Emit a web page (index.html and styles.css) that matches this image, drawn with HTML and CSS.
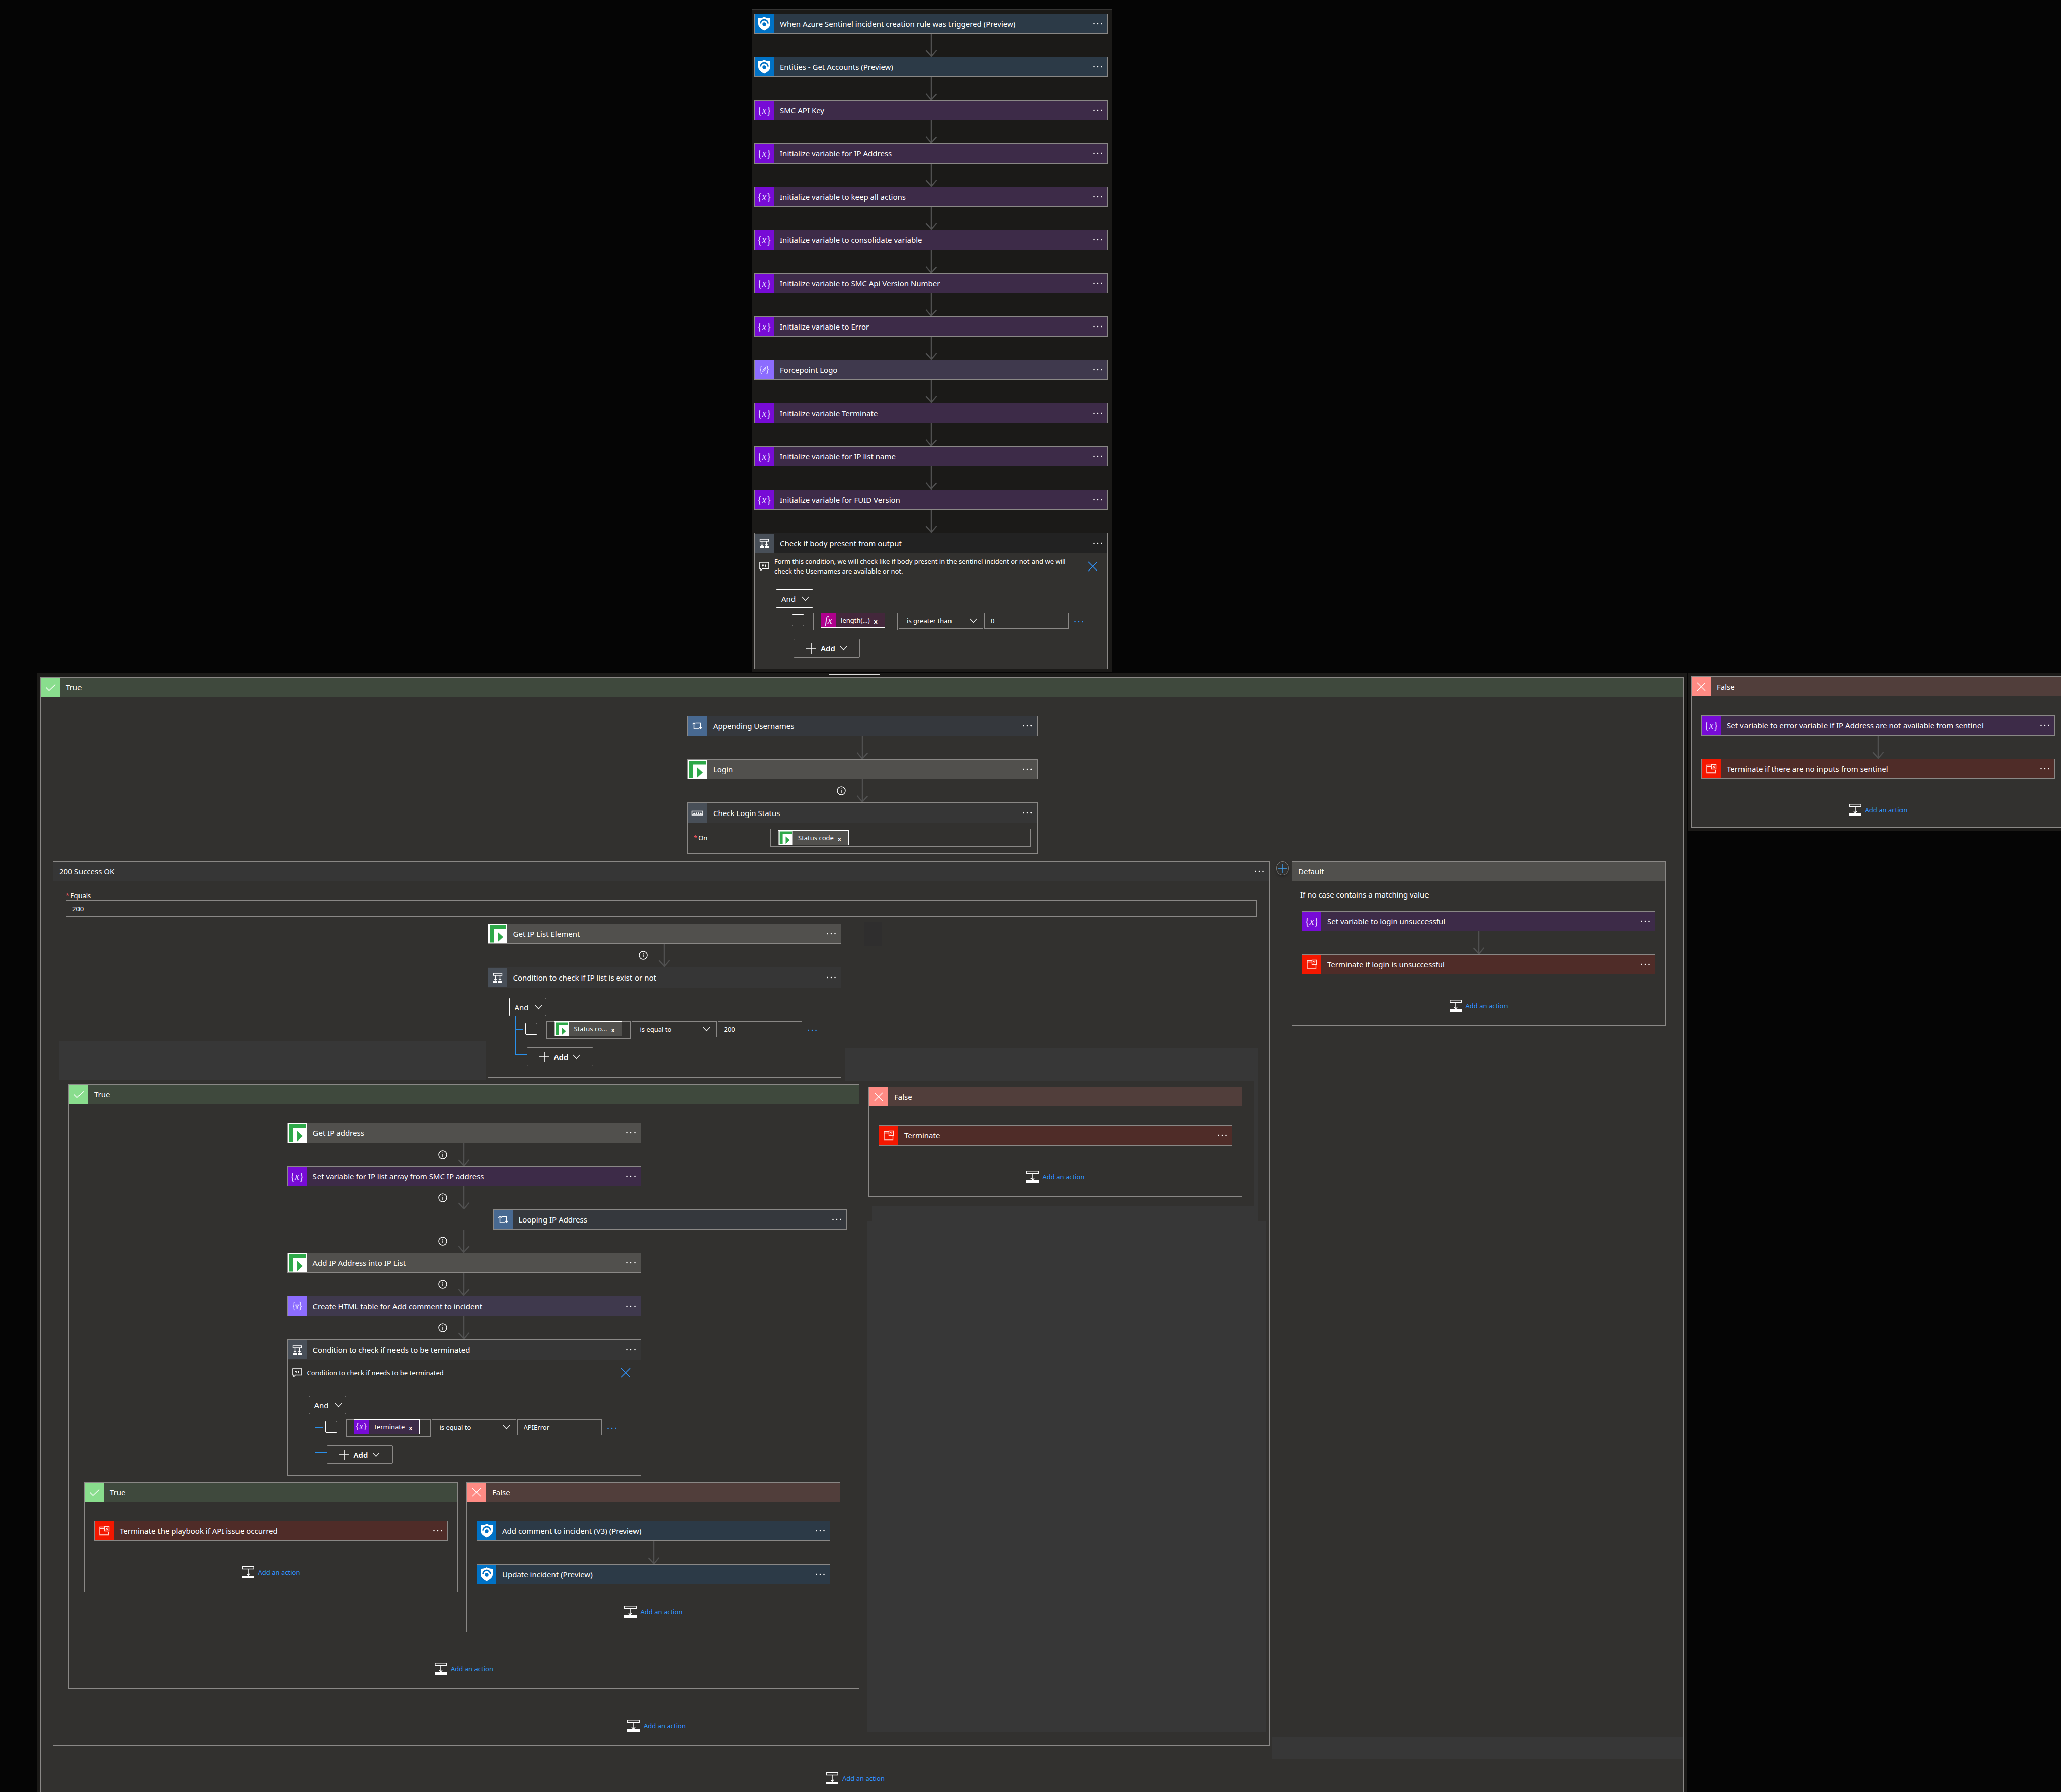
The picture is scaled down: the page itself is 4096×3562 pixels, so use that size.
FILE: index.html
```html
<!DOCTYPE html>
<html lang="en">
<head>
<meta charset="utf-8">
<meta name="viewport" content="width=device-width, initial-scale=1">
<title>Playbook designer</title>
<link rel="stylesheet" href="styles.css">
</head>
<body>
<svg class="sprite" aria-hidden="true">
  <symbol id="dots" viewBox="0 0 18 4"><g fill="currentColor"><circle cx="1.5" cy="2" r="1.3"/><circle cx="9" cy="2" r="1.3"/><circle cx="16.5" cy="2" r="1.3"/></g></symbol>
  <symbol id="shield" viewBox="0 0 38 38"><path d="M19 5c3.600 2.400 7.600 3.200 12 3v11c0 6-5 10-12 13.500C12 29 7 25 7 19V8c4.400.2 8.400-.6 12-3z" fill="#fff"/><path d="M11.500 18.500a7.500 7.500 0 0 1 15 0" fill="none" stroke="#0072c6" stroke-width="2.800"/><circle cx="19" cy="20" r="3.700" fill="#0072c6"/></symbol>
  <symbol id="compose" viewBox="0 0 38 38"><g fill="none" stroke="#e4dcff" stroke-width="1.400"><path d="M14.500 11.500c-3 0-2 3-2.200 5-.1 1.500-1 2.500-2.300 2.500 1.300 0 2.200 1 2.300 2.500.2 2-.8 5 2.200 5M23.500 11.500c3 0 2 3 2.200 5 .1 1.500 1 2.500 2.300 2.500-1.300 0-2.200 1-2.300 2.500-.2 2 .8 5-2.200 5"/><path d="M16 22.500l1-3.500 4-4.500c1.500-.5 2 .5 1.300 1.800l-3.800 4.700z"/></g></symbol>
  <symbol id="table" viewBox="0 0 38 38"><g fill="none" stroke="#e4dcff" stroke-width="1.400"><path d="M14.500 11.500c-3 0-2 3-2.200 5-.1 1.500-1 2.500-2.300 2.500 1.300 0 2.200 1 2.300 2.500.2 2-.8 5 2.200 5M23.500 11.500c3 0 2 3 2.200 5 .1 1.500 1 2.500 2.300 2.500-1.300 0-2.200 1-2.300 2.500-.2 2 .8 5-2.200 5"/><path d="M15.500 16.500h7l-2.700 3v3.500h-1.600v-3.500z"/></g></symbol>
  <symbol id="http" viewBox="0 0 38 38"><path fill="#fff" d="M0 0h38v38H0z"/><path d="M3 2h33v7.500H11V36.500H3zM19 15.500l11 10-11 10z" fill="#2da848"/></symbol>
  <symbol id="loop" viewBox="0 0 38 38"><path d="M12.500 25V13M9.500 16l3-3 3 3M12.500 25h10M15.500 13.500h10V25M22.500 22l3 3 3-3" fill="none" stroke="#fff" stroke-width="1.500"/></symbol>
  <symbol id="branch" viewBox="0 0 38 38"><g fill="none" stroke="#fff" stroke-width="1.400"><path d="M10.500 11h17v4h-17zM14.500 15v8.500M12 21.500l2.500 2.500 2.500-2.500M23.500 15v8.500M21 21.500l2.500 2.500 2.500-2.500"/></g><path d="M10 25h8v4h-8zM20 25h8v4h-8z" fill="#fff"/></symbol>
  <symbol id="switch" viewBox="0 0 38 38"><path d="M8.500 15.500h21.500v7.500H8.500z" fill="none" stroke="#fff" stroke-width="1.600"/><path d="M11 21l1.700-3.500 1.700 3.500zM15.500 21l1.700-3.500 1.700 3.500zM20 21l1.700-3.500 1.700 3.500zM24.500 21l1.700-3.500 1.700 3.500z" fill="#fff"/></symbol>
  <symbol id="stop" viewBox="0 0 38 38"><g fill="none" stroke="#ffe0dc" stroke-width="1.400"><path d="M19 11.500h-9v16h17.500V21M10 14.500h9"/><path d="M19.500 10.500h9v9h-9zM22 13l4 4M26 13l-4 4"/></g><path d="M10 26h17.500v2H10z" fill="#ffb0a8"/></symbol>
  <symbol id="check" viewBox="0 0 38 38"><path d="M10.500 19.500l6 6L29 13.500" fill="none" stroke="#fff" stroke-width="1.500"/></symbol>
  <symbol id="cross" viewBox="0 0 38 38"><path d="M11 11l16 16M27 11L11 27" fill="none" stroke="#fff" stroke-width="1.400"/></symbol>
  <symbol id="dismiss" viewBox="0 0 20 20"><path d="M1 1l18 18M19 1L1 19" fill="none" stroke="currentColor" stroke-width="1.600"/></symbol>
  <symbol id="note" viewBox="0 0 20 18"><path d="M1 1h18v12.500H6.500L3 17v-3.500H1z" fill="none" stroke="#fff" stroke-width="1.600"/><path d="M6 5.500h2.800v3L7.500 10H6.600l.6-2H6zM11 5.500h2.800v3L12.500 10h-.9l.6-2H11z" fill="#fff"/></symbol>
  <symbol id="chevron" viewBox="0 0 16 10"><path d="M1 1l7 7.500L15 1" fill="none" stroke="#fff" stroke-width="1.300"/></symbol>
  <symbol id="plus" viewBox="0 0 20 20"><path d="M10 0v20M0 10h20" fill="none" stroke="currentColor" stroke-width="1.600"/></symbol>
  <symbol id="insert" viewBox="0 0 24 24"><path d="M.8.8h22.400v4.600H.8zM12 5.500v13M9 15l3 3.500 3-3.500" fill="none" stroke="#fff" stroke-width="1.500"/><path d="M0 19h24v5H0z" fill="#fff"/></symbol>
  <symbol id="arrow" viewBox="0 0 24 46"><path d="M12 0v45M1.500 33L12 45l10.500-12" fill="none" stroke="#505050" stroke-width="2.500"/></symbol>
  <symbol id="info" viewBox="0 0 18 18"><circle cx="9" cy="9" r="8" fill="none" stroke="#fff" stroke-width="1.500"/><path d="M9 7.500v5.500M9 4.500v1.600" stroke="#fff" stroke-width="1.400"/></symbol>
</svg>

<main class="workflow">
  <section class="stack">
    <article class="card card--sentinel"><span class="card-icon"><svg><use href="#shield"/></svg></span><h2 class="title">When Azure Sentinel incident creation rule was triggered (Preview)</h2><button class="more" aria-label="More"><svg><use href="#dots"/></svg></button></article>
    <div class="link"><svg class="arrow"><use href="#arrow"/></svg></div>
    <article class="card card--sentinel"><span class="card-icon"><svg><use href="#shield"/></svg></span><h2 class="title">Entities - Get Accounts (Preview)</h2><button class="more" aria-label="More"><svg><use href="#dots"/></svg></button></article>
    <div class="link"><svg class="arrow"><use href="#arrow"/></svg></div>
    <article class="card card--variable"><span class="card-icon">{<i>x</i>}</span><h2 class="title">SMC API Key</h2><button class="more" aria-label="More"><svg><use href="#dots"/></svg></button></article>
    <div class="link"><svg class="arrow"><use href="#arrow"/></svg></div>
    <article class="card card--variable"><span class="card-icon">{<i>x</i>}</span><h2 class="title">Initialize variable for IP Address</h2><button class="more" aria-label="More"><svg><use href="#dots"/></svg></button></article>
    <div class="link"><svg class="arrow"><use href="#arrow"/></svg></div>
    <article class="card card--variable"><span class="card-icon">{<i>x</i>}</span><h2 class="title">Initialize variable to keep all actions</h2><button class="more" aria-label="More"><svg><use href="#dots"/></svg></button></article>
    <div class="link"><svg class="arrow"><use href="#arrow"/></svg></div>
    <article class="card card--variable"><span class="card-icon">{<i>x</i>}</span><h2 class="title">Initialize variable to consolidate variable</h2><button class="more" aria-label="More"><svg><use href="#dots"/></svg></button></article>
    <div class="link"><svg class="arrow"><use href="#arrow"/></svg></div>
    <article class="card card--variable"><span class="card-icon">{<i>x</i>}</span><h2 class="title">Initialize variable to SMC Api Version Number</h2><button class="more" aria-label="More"><svg><use href="#dots"/></svg></button></article>
    <div class="link"><svg class="arrow"><use href="#arrow"/></svg></div>
    <article class="card card--variable"><span class="card-icon">{<i>x</i>}</span><h2 class="title">Initialize variable to Error</h2><button class="more" aria-label="More"><svg><use href="#dots"/></svg></button></article>
    <div class="link"><svg class="arrow"><use href="#arrow"/></svg></div>
    <article class="card card--data"><span class="card-icon"><svg><use href="#compose"/></svg></span><h2 class="title">Forcepoint Logo</h2><button class="more" aria-label="More"><svg><use href="#dots"/></svg></button></article>
    <div class="link"><svg class="arrow"><use href="#arrow"/></svg></div>
    <article class="card card--variable"><span class="card-icon">{<i>x</i>}</span><h2 class="title">Initialize variable Terminate</h2><button class="more" aria-label="More"><svg><use href="#dots"/></svg></button></article>
    <div class="link"><svg class="arrow"><use href="#arrow"/></svg></div>
    <article class="card card--variable"><span class="card-icon">{<i>x</i>}</span><h2 class="title">Initialize variable for IP list name</h2><button class="more" aria-label="More"><svg><use href="#dots"/></svg></button></article>
    <div class="link"><svg class="arrow"><use href="#arrow"/></svg></div>
    <article class="card card--variable"><span class="card-icon">{<i>x</i>}</span><h2 class="title">Initialize variable for FUID Version</h2><button class="more" aria-label="More"><svg><use href="#dots"/></svg></button></article>
    <div class="link"><svg class="arrow"><use href="#arrow"/></svg></div>

    <article class="box box--dark">
      <header class="box-head"><span class="card-icon card-icon--slate"><svg><use href="#branch"/></svg></span><h2 class="title">Check if body present from output</h2><button class="more" aria-label="More"><svg><use href="#dots"/></svg></button></header>
      <div class="note"><svg class="note-icon"><use href="#note"/></svg><p class="note-text">Form this condition, we will check like if body present in the sentinel incident or not and we will<br>check the Usernames are available or not.</p><button class="dismiss" aria-label="Remove note"><svg><use href="#dismiss"/></svg></button></div>
      <div class="builder">
        <div class="pick pick--group"><select class="pick-input" aria-label="Group operator"><option>And</option></select><svg class="chevron"><use href="#chevron"/></svg></div>
        <div class="rules">
          <div class="rule">
            <input type="checkbox" class="tick" aria-label="Select rule">
            <div class="operand"><span class="chip chip--fx"><span class="chip-icon"><i>fx</i></span><span class="chip-text">length(...)</span><button class="chip-x" aria-label="Remove">x</button></span></div>
            <div class="pick pick--op"><select class="pick-input" aria-label="Comparison"><option>is greater than</option></select><svg class="chevron"><use href="#chevron"/></svg></div>
            <input type="text" class="value" aria-label="Value" value="0">
            <button class="more more--rule" aria-label="Rule menu"><svg><use href="#dots"/></svg></button>
          </div>
          <button class="add-rule"><svg class="plus"><use href="#plus"/></svg>Add<svg class="chevron"><use href="#chevron"/></svg></button>
        </div>
      </div>
    </article>
  </section>

  <div class="branches">
    <div class="frame frame--true">
      <section class="panel panel--open">
        <header class="panel-head panel-head--true"><span class="head-icon"><svg><use href="#check"/></svg></span><h2 class="title">True</h2></header>
        <div class="flow flow--narrow">
          <article class="card card--loop"><span class="card-icon"><svg><use href="#loop"/></svg></span><h2 class="title">Appending Usernames</h2><button class="more" aria-label="More"><svg><use href="#dots"/></svg></button></article>
          <div class="link"><svg class="arrow"><use href="#arrow"/></svg></div>
          <article class="card card--http"><span class="card-icon"><svg><use href="#http"/></svg></span><h2 class="title">Login</h2><button class="more" aria-label="More"><svg><use href="#dots"/></svg></button></article>
          <div class="link"><svg class="info"><use href="#info"/></svg><svg class="arrow"><use href="#arrow"/></svg></div>
          <article class="box">
            <header class="box-head"><span class="card-icon card-icon--slate"><svg><use href="#switch"/></svg></span><h2 class="title">Check Login Status</h2><button class="more" aria-label="More"><svg><use href="#dots"/></svg></button></header>
            <div class="switch-row"><span class="label"><span class="star">*</span>On</span><div class="switch-field"><span class="chip chip--http"><span class="chip-icon"><svg><use href="#http"/></svg></span><span class="chip-text">Status code</span><button class="chip-x" aria-label="Remove">x</button></span></div></div>
          </article>
        </div>

        <div class="cases">
          <section class="case">
            <header class="panel-head panel-head--case"><h2 class="title">200 Success OK</h2><button class="more" aria-label="More"><svg><use href="#dots"/></svg></button></header>
            <div class="equals"><label class="label" for="equals"><span class="star">*</span>Equals</label><input type="text" id="equals" class="value" value="200"></div>
            <div class="flow flow--case">
              <article class="card card--http"><span class="card-icon"><svg><use href="#http"/></svg></span><h2 class="title">Get IP List Element</h2><button class="more" aria-label="More"><svg><use href="#dots"/></svg></button></article>
              <div class="link"><svg class="info"><use href="#info"/></svg><svg class="arrow"><use href="#arrow"/></svg></div>
              <article class="box">
                <header class="box-head"><span class="card-icon card-icon--slate"><svg><use href="#branch"/></svg></span><h2 class="title">Condition to check if IP list is exist or not</h2><button class="more" aria-label="More"><svg><use href="#dots"/></svg></button></header>
                <div class="builder builder--top">
                  <div class="pick pick--group"><select class="pick-input" aria-label="Group operator"><option>And</option></select><svg class="chevron"><use href="#chevron"/></svg></div>
                  <div class="rules">
                    <div class="rule">
                      <input type="checkbox" class="tick" aria-label="Select rule">
                      <div class="operand"><span class="chip chip--http"><span class="chip-icon"><svg><use href="#http"/></svg></span><span class="chip-text">Status co...</span><button class="chip-x" aria-label="Remove">x</button></span></div>
                      <div class="pick pick--op"><select class="pick-input" aria-label="Comparison"><option>is equal to</option></select><svg class="chevron"><use href="#chevron"/></svg></div>
                      <input type="text" class="value" aria-label="Value" value="200">
                      <button class="more more--rule" aria-label="Rule menu"><svg><use href="#dots"/></svg></button>
                    </div>
                    <button class="add-rule"><svg class="plus"><use href="#plus"/></svg>Add<svg class="chevron"><use href="#chevron"/></svg></button>
                  </div>
                </div>
              </article>
            </div>

            <div class="outcomes">
              <section class="panel">
                <header class="panel-head panel-head--true"><span class="head-icon"><svg><use href="#check"/></svg></span><h2 class="title">True</h2></header>
                <div class="flow">
                  <article class="card card--http"><span class="card-icon"><svg><use href="#http"/></svg></span><h2 class="title">Get IP address</h2><button class="more" aria-label="More"><svg><use href="#dots"/></svg></button></article>
                  <div class="link"><svg class="info"><use href="#info"/></svg><svg class="arrow"><use href="#arrow"/></svg></div>
                  <article class="card card--variable"><span class="card-icon">{<i>x</i>}</span><h2 class="title">Set variable for IP list array from SMC IP address</h2><button class="more" aria-label="More"><svg><use href="#dots"/></svg></button></article>
                  <div class="link"><svg class="info"><use href="#info"/></svg><svg class="arrow"><use href="#arrow"/></svg></div>
                  <article class="card card--loop card--shifted"><span class="card-icon"><svg><use href="#loop"/></svg></span><h2 class="title">Looping IP Address</h2><button class="more" aria-label="More"><svg><use href="#dots"/></svg></button></article>
                  <div class="link"><svg class="info"><use href="#info"/></svg><svg class="arrow"><use href="#arrow"/></svg></div>
                  <article class="card card--http"><span class="card-icon"><svg><use href="#http"/></svg></span><h2 class="title">Add IP Address into IP List</h2><button class="more" aria-label="More"><svg><use href="#dots"/></svg></button></article>
                  <div class="link"><svg class="info"><use href="#info"/></svg><svg class="arrow"><use href="#arrow"/></svg></div>
                  <article class="card card--data"><span class="card-icon"><svg><use href="#table"/></svg></span><h2 class="title">Create HTML table for Add comment to incident</h2><button class="more" aria-label="More"><svg><use href="#dots"/></svg></button></article>
                  <div class="link"><svg class="info"><use href="#info"/></svg><svg class="arrow"><use href="#arrow"/></svg></div>
                  <article class="box">
                    <header class="box-head"><span class="card-icon card-icon--slate"><svg><use href="#branch"/></svg></span><h2 class="title">Condition to check if needs to be terminated</h2><button class="more" aria-label="More"><svg><use href="#dots"/></svg></button></header>
                    <div class="note"><svg class="note-icon"><use href="#note"/></svg><p class="note-text">Condition to check if needs to be terminated</p><button class="dismiss" aria-label="Remove note"><svg><use href="#dismiss"/></svg></button></div>
                    <div class="builder">
                      <div class="pick pick--group"><select class="pick-input" aria-label="Group operator"><option>And</option></select><svg class="chevron"><use href="#chevron"/></svg></div>
                      <div class="rules">
                        <div class="rule">
                          <input type="checkbox" class="tick" aria-label="Select rule">
                          <div class="operand"><span class="chip chip--variable"><span class="chip-icon">{<i>x</i>}</span><span class="chip-text">Terminate</span><button class="chip-x" aria-label="Remove">x</button></span></div>
                          <div class="pick pick--op"><select class="pick-input" aria-label="Comparison"><option>is equal to</option></select><svg class="chevron"><use href="#chevron"/></svg></div>
                          <input type="text" class="value" aria-label="Value" value="APIError">
                          <button class="more more--rule" aria-label="Rule menu"><svg><use href="#dots"/></svg></button>
                        </div>
                        <button class="add-rule"><svg class="plus"><use href="#plus"/></svg>Add<svg class="chevron"><use href="#chevron"/></svg></button>
                      </div>
                    </div>
                  </article>
                </div>
                <div class="outcomes outcomes--inner">
                  <section class="panel">
                    <header class="panel-head panel-head--true"><span class="head-icon"><svg><use href="#check"/></svg></span><h2 class="title">True</h2></header>
                    <div class="flow">
                      <article class="card card--stop"><span class="card-icon"><svg><use href="#stop"/></svg></span><h2 class="title">Terminate the playbook if API issue occurred</h2><button class="more" aria-label="More"><svg><use href="#dots"/></svg></button></article>
                    </div>
                    <a class="insert" href="#"><svg><use href="#insert"/></svg>Add an action</a>
                  </section>
                  <section class="panel">
                    <header class="panel-head panel-head--false"><span class="head-icon"><svg><use href="#cross"/></svg></span><h2 class="title">False</h2></header>
                    <div class="flow">
                      <article class="card card--sentinel"><span class="card-icon"><svg><use href="#shield"/></svg></span><h2 class="title">Add comment to incident (V3) (Preview)</h2><button class="more" aria-label="More"><svg><use href="#dots"/></svg></button></article>
                      <div class="link"><svg class="arrow"><use href="#arrow"/></svg></div>
                      <article class="card card--sentinel"><span class="card-icon"><svg><use href="#shield"/></svg></span><h2 class="title">Update incident (Preview)</h2><button class="more" aria-label="More"><svg><use href="#dots"/></svg></button></article>
                    </div>
                    <a class="insert insert--tight" href="#"><svg><use href="#insert"/></svg>Add an action</a>
                  </section>
                </div>
                <a class="insert insert--outer" href="#"><svg><use href="#insert"/></svg>Add an action</a>
              </section>
              <section class="panel panel--lowered">
                <header class="panel-head panel-head--false"><span class="head-icon"><svg><use href="#cross"/></svg></span><h2 class="title">False</h2></header>
                <div class="flow">
                  <article class="card card--stop"><span class="card-icon"><svg><use href="#stop"/></svg></span><h2 class="title">Terminate</h2><button class="more" aria-label="More"><svg><use href="#dots"/></svg></button></article>
                </div>
                <a class="insert" href="#"><svg><use href="#insert"/></svg>Add an action</a>
              </section>
            </div>
            <div class="tail tail--case"><a class="insert insert--outer" href="#"><svg><use href="#insert"/></svg>Add an action</a></div>
          </section>

          <button class="add-case" aria-label="Add case"><svg><use href="#plus"/></svg></button>

          <section class="panel">
            <header class="panel-head panel-head--default"><h2 class="title">Default</h2></header>
            <p class="hint">If no case contains a matching value</p>
            <div class="flow flow--flush">
              <article class="card card--variable"><span class="card-icon">{<i>x</i>}</span><h2 class="title">Set variable to login unsuccessful</h2><button class="more" aria-label="More"><svg><use href="#dots"/></svg></button></article>
              <div class="link"><svg class="arrow"><use href="#arrow"/></svg></div>
              <article class="card card--stop"><span class="card-icon"><svg><use href="#stop"/></svg></span><h2 class="title">Terminate if login is unsuccessful</h2><button class="more" aria-label="More"><svg><use href="#dots"/></svg></button></article>
            </div>
            <a class="insert" href="#"><svg><use href="#insert"/></svg>Add an action</a>
          </section>
        </div>
        <div class="tail"><a class="insert" href="#"><svg><use href="#insert"/></svg>Add an action</a></div>
      </section>
    </div>

    <div class="frame frame--false">
      <section class="panel panel--cut">
        <header class="panel-head panel-head--false"><span class="head-icon"><svg><use href="#cross"/></svg></span><h2 class="title">False</h2></header>
        <div class="flow">
          <article class="card card--variable"><span class="card-icon">{<i>x</i>}</span><h2 class="title">Set variable to error variable if IP Address are not available from sentinel</h2><button class="more" aria-label="More"><svg><use href="#dots"/></svg></button></article>
          <div class="link"><svg class="arrow"><use href="#arrow"/></svg></div>
          <article class="card card--stop"><span class="card-icon"><svg><use href="#stop"/></svg></span><h2 class="title">Terminate if there are no inputs from sentinel</h2><button class="more" aria-label="More"><svg><use href="#dots"/></svg></button></article>
        </div>
        <a class="insert" href="#"><svg><use href="#insert"/></svg>Add an action</a>
      </section>
    </div>
  </div>
</main>
</body>
</html>
```
FILE: styles.css
```css
:root {
  --line: #8a8886;
  --surface: #32312f;
  --frame: #1b1a18;
  --shade: #373737;
  --blue: #3094ff;
}

* { box-sizing: border-box; }

body {
  margin: 0;
  background: #050505;
  color: #fff;
  font: 15px/20px "Noto Sans", "Open Sans", sans-serif;
}

h2, p { margin: 0; }
button, select, input { font: inherit; color: inherit; margin: 0; border-radius: 0; }
button { padding: 0; border: 0; background: none; cursor: pointer; }
svg { display: block; flex: none; }
.sprite { position: absolute; width: 0; height: 0; }

.workflow {
  display: flex;
  flex-direction: column;
  min-height: 100vh;
  padding-top: 18px;
  overflow: hidden;
}

/* Main column of steps */
.stack {
  align-self: flex-start;
  margin-left: 36.5%;
  padding: 7px 7px 6px 4px;
  border-top: 2px solid #363534;
  background: var(--frame);
}

/* Step card */
.card, .box { width: 703px; border: 1px solid var(--line); }
.card { display: flex; align-items: center; height: 40px; }
.card-icon {
  display: flex;
  flex: none;
  align-items: center;
  justify-content: center;
  width: 38px;
  height: 38px;
  color: #eadcff;
  font: 20px/20px "Liberation Serif", serif;
}
.card-icon svg { width: 38px; height: 38px; }
.card-icon--slate { background: #484f58; }
.title {
  flex: 1;
  padding-left: 12px;
  font-size: 15px;
  font-weight: 400;
  line-height: 20px;
  white-space: nowrap;
}
.more {
  display: flex;
  align-items: center;
  justify-content: center;
  width: 38px;
  height: 38px;
}
.more svg { width: 18px; height: 4px; }

.card--sentinel { background: #2c3a47; }
.card--sentinel .card-icon { background: #0072c6; }
.card--variable { background: #3d2b48; }
.card--variable .card-icon { background: #770bd6; }
.card--data { background: #3f394d; }
.card--data .card-icon { background: #8c6cff; }
.card--http { background: #51504d; }
.card--loop { background: #35383d; }
.card--loop .card-icon { background: #486991; }
.card--stop { background: #4f2c28; }
.card--stop .card-icon { background: #f41700; }
.card--shifted { margin-left: 818px; }

/* Connector between steps */
.link {
  position: relative;
  display: flex;
  justify-content: center;
  width: 703px;
  height: 46px;
}
.arrow { width: 24px; height: 46px; }
.info { position: absolute; top: 14px; left: 300px; width: 18px; height: 18px; }

/* Expanded step */
.box { background: var(--surface); }
.box-head { display: flex; align-items: center; height: 40px; background: #363636; }
.box--dark .box-head { background: #222; }

.note {
  display: flex;
  align-items: center;
  height: 52px;
  margin-bottom: 19px;
  padding: 0 19px 0 9px;
}
.note-icon { width: 20px; height: 18px; margin-right: 10px; }
.note-text { flex: 1; font-size: 13px; line-height: 19px; white-space: nowrap; }
.dismiss { color: var(--blue); }
.dismiss svg { width: 20px; height: 20px; }

.builder { padding: 0 0 22px 42px; }
.builder--top { padding-top: 20px; }
.pick { position: relative; }
.pick-input {
  display: block;
  width: 100%;
  height: 100%;
  border: 1px solid var(--line);
  background: none;
  appearance: none;
}
.pick-input option { background: var(--surface); }
.chevron { width: 15px; height: 10px; }
.pick .chevron { position: absolute; top: 50%; right: 12px; margin-top: -5px; pointer-events: none; }
.pick--group { width: 74px; height: 37px; }
.pick--group .chevron { right: 8px; }
.pick--group .pick-input { padding: 0 10px; border-color: #fff; border-radius: 2px; }
.pick--op { width: 168px; height: 32px; font-size: 13px; }
.pick--op .pick-input { padding: 0 15px; }

.rules { position: relative; padding-top: 10px; }
.rules::before {
  content: "";
  position: absolute;
  top: 0;
  left: 12px;
  width: 24px;
  height: 76px;
  border: solid #2a90ea;
  border-width: 0 0 1px 1px;
}
.rules::after {
  content: "";
  position: absolute;
  top: 26px;
  left: 13px;
  width: 15px;
  height: 1px;
  background: #2a90ea;
}
.rule { display: flex; align-items: flex-start; gap: 2px; padding-left: 32px; }
.tick {
  width: 24px;
  height: 24px;
  margin: 3px 16px 0 0;
  border: 1px solid #fff;
  border-radius: 2px;
  background: none;
  appearance: none;
}
.operand { display: flex; align-items: flex-start; width: 168px; height: 35px; padding-left: 14px; border: 1px solid var(--line); }
.value {
  width: 168px;
  height: 32px;
  padding: 0 12px;
  border: 1px solid var(--line);
  background: none;
  font-size: 13px;
}
.more--rule { height: 35px; margin-left: -1px; color: var(--blue); }
.add-rule {
  position: relative;
  display: flex;
  align-items: center;
  gap: 9px;
  width: 132px;
  height: 37px;
  margin: 17px 0 0 35px;
  padding-left: 24px;
  border: 1px solid var(--line);
  border-radius: 2px;
  background: var(--surface);
  font-weight: 600;
}
.plus { width: 20px; height: 20px; }

/* Token inside a field */
.chip {
  display: flex;
  align-items: center;
  height: 30px;
  margin-top: -1px;
  border: 1px solid #fff;
  font-size: 13px;
}
.chip-icon {
  display: flex;
  align-items: center;
  justify-content: center;
  width: 29px;
  height: 28px;
  color: #f0e0ff;
  font: 17px/20px "Liberation Serif", serif;
}
.chip-icon svg { width: 29px; height: 28px; }
.chip-text { margin-left: 10px; white-space: nowrap; }
.chip-x { width: 9px; margin: 3px 13px 0 7px; font-weight: 600; line-height: 20px; }
.chip--fx { background: #43273b; }
.chip--fx .chip-icon { background: #ae008c; font-size: 20px; }
.chip--http { background: #51504d; }
.chip--variable { background: #3d2b48; }
.chip--variable .chip-icon { background: #770bd6; }

/* Switch step */
.switch-row { display: flex; align-items: center; padding: 11px 12px 13px; }
.label { font-size: 13px; line-height: 18px; }
.star { margin-right: 2px; color: #f1555f; }
.switch-row .label { width: 152px; }
.switch-field { display: flex; flex: 1; align-items: center; height: 36px; padding-left: 14px; border: 1px solid var(--line); }
.switch-field .chip { margin: 0; }

/* Branches */
.branches {
  display: grid;
  flex: 1;
  grid-template-columns: minmax(0, 3279fr) minmax(0, 741fr);
  gap: 3px;
  align-items: start;
  margin-top: 2px;
  padding-left: 73px;
}
.frame { position: relative; background: var(--frame); }
.frame--true { align-self: stretch; display: flex; padding: 8px 6px 0 7px; }
.frame--true::before {
  content: "";
  position: absolute;
  top: 1px;
  left: 48%;
  width: 101px;
  height: 3px;
  background: #dcdcda;
}
.frame--false { padding: 6px 0 6px 5px; }

.panel { min-width: 743px; border: 1px solid var(--line); background-color: var(--surface); padding-bottom: 27px; }
.panel-head { display: flex; align-items: center; height: 38px; }
.panel-head--true { background: #3f493d; }
.panel-head--false { background: #513e3b; }
.panel-head--case { background: #363636; }
.panel-head--default { background: #51504d; }
.head-icon { width: 38px; height: 38px; }
.head-icon svg { width: 38px; height: 38px; }
.panel-head--true .head-icon { background: #89dd8d; }
.panel-head--false .head-icon { background: #ff8b84; }

.panel--open {
  flex: 1;
  padding: 0;
  border-bottom: 0;
  background-image: linear-gradient(var(--shade), var(--shade));
  background-repeat: no-repeat;
  background-position: right 0 bottom 66px;
  background-size: 818px 44px;
}
.panel--cut { padding-bottom: 21px; border-width: 2px 0 2px 2px; }
.panel--lowered { margin-top: 5px; }

.flow { display: flex; flex-direction: column; align-items: center; padding-top: 38px; }
.flow--narrow { padding-left: 2px; }
.flow--narrow .card, .flow--narrow .box { width: 696px; }
.flow--case { padding: 14px 0 0 12px; }
.flow--flush { padding-top: 0; }

.insert {
  display: flex;
  align-items: center;
  justify-content: center;
  gap: 8px;
  height: 24px;
  margin-top: 50px;
  color: var(--blue);
  font-size: 13px;
  text-decoration: none;
}
.insert svg { width: 24px; height: 24px; }
.insert--tight { margin-top: 43px; }
.insert--outer { margin-top: 61px; }

.cases { display: flex; align-items: flex-start; padding: 15px 35px 0 24px; }
.case {
  flex: 1;
  padding-bottom: 27px;
  border: 1px solid var(--line);
  background-color: var(--surface);
  background-image:
    linear-gradient(var(--shade), var(--shade)),
    linear-gradient(var(--shade), var(--shade)),
    linear-gradient(var(--shade), var(--shade)),
    linear-gradient(var(--shade), var(--shade)),
    linear-gradient(var(--shade), var(--shade)),
    linear-gradient(#2f2e2e, #2f2e2e);
  background-repeat: no-repeat;
  background-position:
    right 6px bottom 26px,
    right 22px top 685px,
    right 22px top 435px,
    right 22px top 371px,
    left 12px top 357px,
    right 769px top 120px;
  background-size:
    792px 1016px,
    767px 30px,
    7px 250px,
    820px 64px,
    848px 76px,
    36px 47px;
}
.add-case {
  display: flex;
  align-items: center;
  justify-content: center;
  width: 28px;
  height: 28px;
  margin: 0 6px 0 13px;
  border: 1px solid #7c7b79;
  border-radius: 50%;
  color: #3fa2f2;
  box-shadow: 0 2px 4px #222;
}
.add-case svg { width: 18px; height: 18px; }

.equals { display: flex; flex-direction: column; padding: 20px 24px 0 25px; }
.equals .value { width: 100%; height: 33px; }

.outcomes { display: flex; align-items: flex-start; gap: 18px; padding: 13px 53px 0 30px; }
.outcomes > .panel:first-child { flex: 1; }
.outcomes > .panel:last-child { flex: none; width: 743px; }
.outcomes--inner { gap: 17px; padding: 13px 37px 0 30px; }
.outcomes--inner > .panel:first-child { flex: none; width: 743px; }

.tail { padding: 3px 26px 14px 0; }
.tail--case { padding: 0 18px 0 0; }
.hint { padding: 17px 0 23px 16px; line-height: 20px; }
```
